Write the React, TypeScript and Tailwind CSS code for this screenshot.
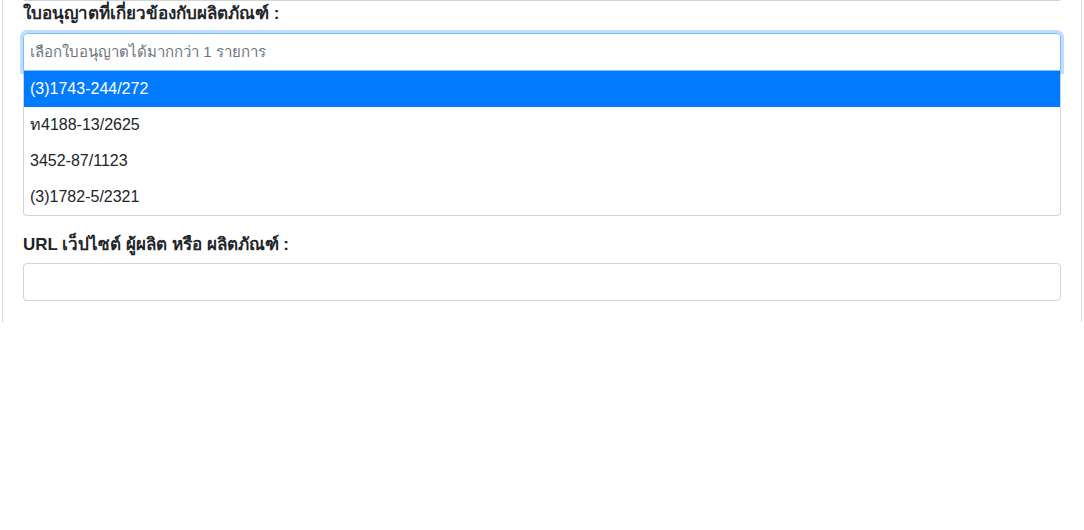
const licenses = ["(3)1743-244/272", "ท4188-13/2625", "3452-87/1123", "(3)1782-5/2321"];

function App() {
  return (
    <div className="w-[1084px] h-[530px] bg-white overflow-hidden" style={{ fontFamily: "Tahoma, 'Liberation Sans', 'DejaVu Sans', sans-serif" }}>
      <div className="mx-[2px] border-x border-[#dcdcdc] h-[323px] px-[20px]">
        <div className="h-[2px] border-b border-[#ced4da] rounded-b -mt-[1px]" />
        <label className="block mt-[2px] text-[17px] font-bold text-[#212529] leading-[22px]">
          ใบอนุญาตที่เกี่ยวข้องกับผลิตภัณฑ์ :
        </label>
        <div className="mt-[8px]">
          <div className="h-[38px] border border-[#80bdff] rounded-t shadow-[0_0_0_3px_rgba(0,123,255,0.25)] flex items-center px-[6px] relative z-10">
            <span className="text-[15px] text-[#6c757d]">เลือกใบอนุญาตได้มากกว่า 1 รายการ</span>
          </div>
          <ul className="border border-t-0 border-[#ced4da] rounded-b">
            {licenses.map((l, i) => (
              <li
                key={l}
                className={
                  i === 0
                    ? "h-[36px] flex items-center px-[6px] text-[16px] bg-[#007bff] text-white"
                    : "h-[36px] flex items-center px-[6px] text-[16px] text-[#212529]"
                }
              >
                {l}
              </li>
            ))}
          </ul>
        </div>
        <label className="block mt-[18px] text-[17px] font-bold text-[#212529] leading-[22px]">
          URL เว็ปไซต์ ผู้ผลิต หรือ ผลิตภัณฑ์ :
        </label>
        <div className="mt-[7px] h-[38px] border border-[#ced4da] rounded" />
      </div>
    </div>
  );
}

export default App;
